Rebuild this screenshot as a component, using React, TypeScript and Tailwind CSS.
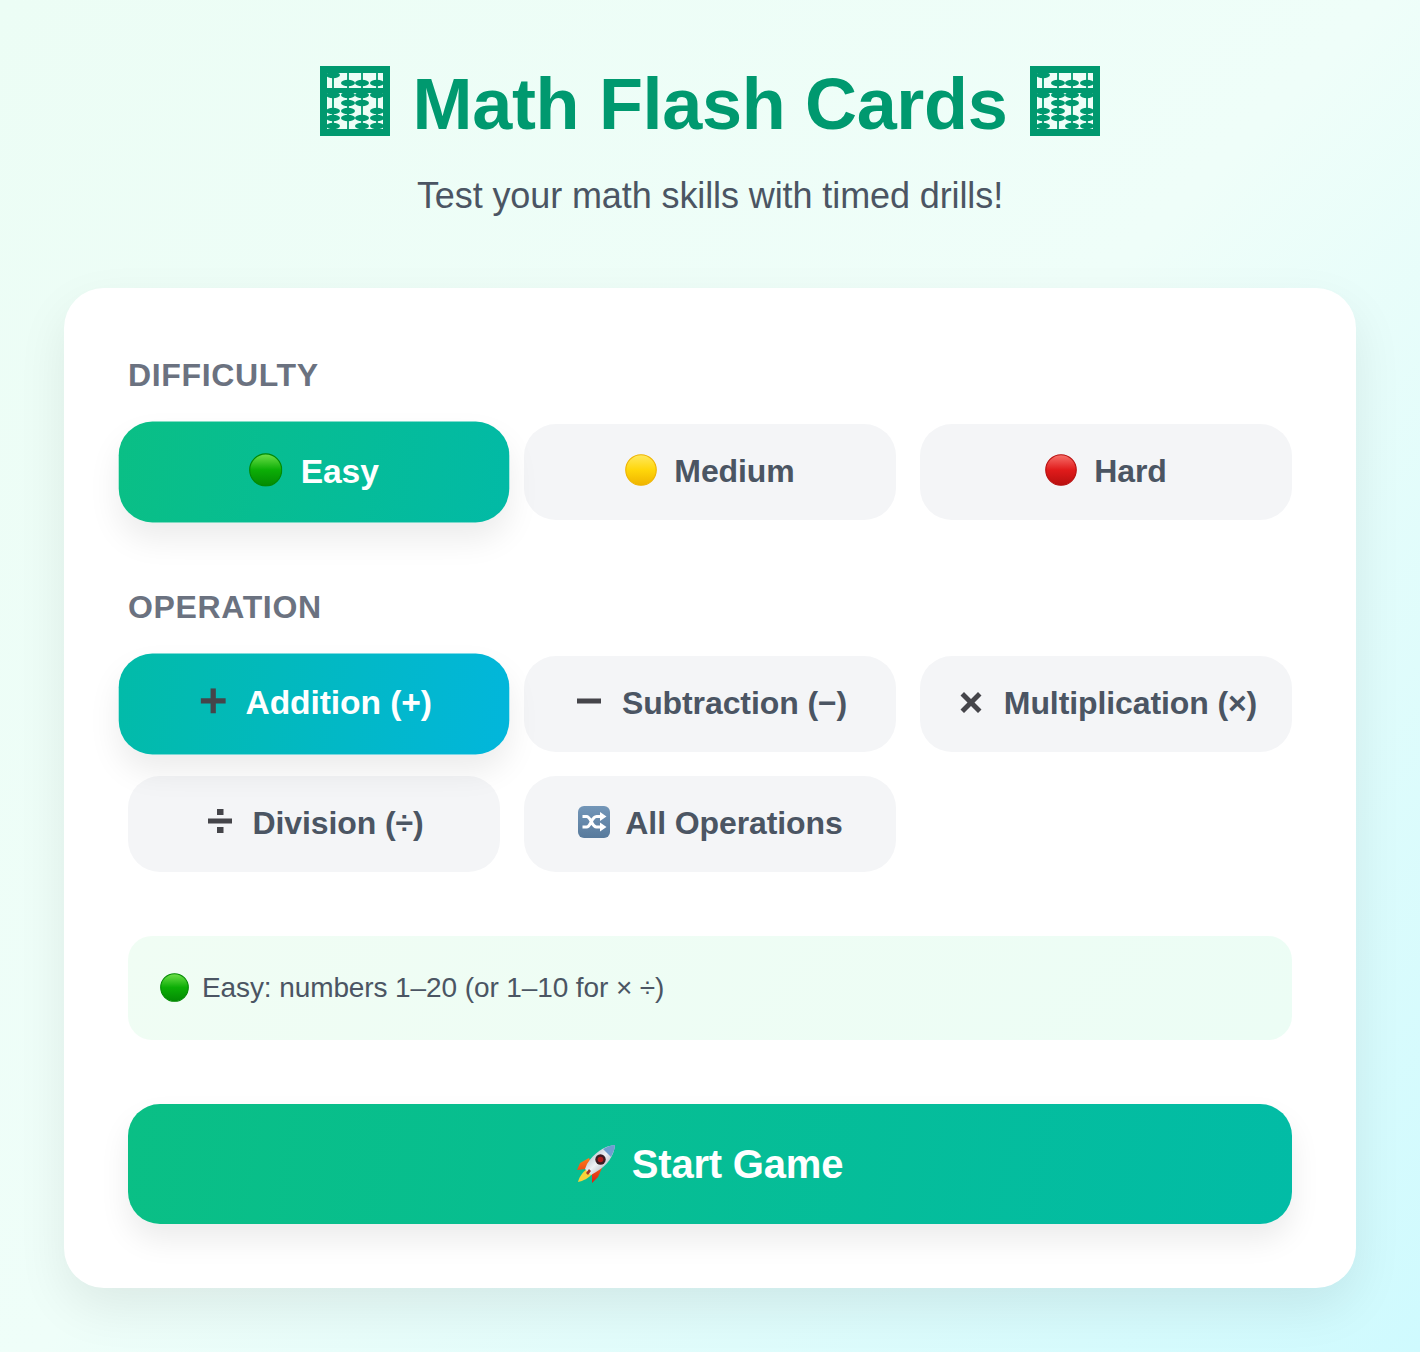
import type { ReactNode } from "react";

const sans = "font-['Liberation_Sans',Arial,sans-serif]";

function Abacus() {
  const cols: [number, number[]][] = [
    [13, [9, 29, 45, 52, 60]],
    [28, [17, 29, 37, 45, 52]],
    [42, [17, 29, 37, 52, 60]],
    [57, [17, 29, 45, 52, 60]],
  ];
  return (
    <svg width="70" height="70" viewBox="0 0 70 70" className="shrink-0 -translate-y-[3px]">
      <path fillRule="evenodd" fill="#00996f" d="M0 0h70v70H0zM7 7v15h56V7zM7 27v36h56V27z" />
      {cols.map(([x, beads]) => (
        <g key={x} fill="#00996f">
          <rect x={x - 0.9} y="7" width="1.8" height="56" />
          {beads.map((y) => (
            <ellipse key={y} cx={x} cy={y} rx="7" ry="3.3" />
          ))}
        </g>
      ))}
    </svg>
  );
}

function Ball({ id, size = 32, light, mid, dark, lift = true }: { id: string; size?: number; light: string; mid: string; dark: string; lift?: boolean }) {
  return (
    <svg width={size} height={size} viewBox="0 0 34 34" className={lift ? "shrink-0 -translate-y-[2px]" : "shrink-0 -translate-y-px"}>
      <defs>
        <linearGradient id={id} x1="0" y1="0" x2="0" y2="1">
          <stop offset="0" stopColor={light} />
          <stop offset="0.5" stopColor={mid} />
          <stop offset="1" stopColor={dark} />
        </linearGradient>
      </defs>
      <circle cx="17" cy="17" r="16.200" fill={`url(#${id})`} stroke={dark} strokeWidth="1.200" />
    </svg>
  );
}

const Green = ({ size, id = "green", lift }: { size?: number; id?: string; lift?: boolean }) => (
  <Ball id={id} size={size} lift={lift} light="#6fe04a" mid="#0cae06" dark="#038a03" />
);
const Yellow = () => <Ball id="yellow" light="#ffe95e" mid="#ffd60a" dark="#efb400" />;
const Red = () => <Ball id="red" light="#f7706a" mid="#e01b1b" dark="#b80f0f" />;

function Plus() {
  return (
    <svg width="24" height="24" viewBox="0 0 24 24" className="shrink-0 -translate-y-[3px]">
      <path fill="#45454a" d="M9.500 0h5v9.500H24v5h-9.500V24h-5v-9.500H0v-5h9.500z" />
    </svg>
  );
}

function Minus() {
  return (
    <svg width="24" height="24" viewBox="0 0 24 24" className="shrink-0 -translate-y-[3px]">
      <rect y="9.500" width="24" height="5" fill="#45454a" />
    </svg>
  );
}

function Times() {
  return (
    <svg width="24" height="24" viewBox="0 0 24 24" className="shrink-0 -translate-y-[2px]">
      <path fill="#45454a" d="M5 2l7 7 7-7 3.500 3.500-7 7 7 7-3.500 3.500-7-7-7 7L1.500 19.500l7-7-7-7z" />
    </svg>
  );
}

function Divide() {
  return (
    <svg width="24" height="24" viewBox="0 0 24 24" className="shrink-0 -translate-y-[3px]">
      <path fill="#45454a" d="M0 9.500h24v5H0zM9 -0.500h6.500V6H9zM9 18h6.500v6.500H9z" />
    </svg>
  );
}

function Shuffle() {
  return (
    <svg width="32" height="32" viewBox="0 0 32 32" className="shrink-0 translate-x-px -translate-y-[2px]">
      <defs>
        <linearGradient id="tile" x1="0" y1="0" x2="0" y2="1">
          <stop offset="0" stopColor="#7396b8" />
          <stop offset="1" stopColor="#587a9c" />
        </linearGradient>
      </defs>
      <rect width="32" height="32" rx="6" fill="url(#tile)" />
      <path
        fill="none"
        stroke="#fff"
        strokeWidth="3"
        d="M4.500 10.500h4c4.500 0 5 10.500 10 10.500H23M4.500 21h4c4.500 0 5-10.500 10-10.500H23"
      />
      <path fill="#fff" d="M22 6l6.500 4.500L22 15zM22 16.500l6.500 4.500-6.500 4.500z" />
    </svg>
  );
}

function Rocket() {
  return (
    <svg width="42" height="42" viewBox="0 0 42 42" className="shrink-0 -translate-x-px">
      <defs>
        <linearGradient id="hull" x1="0" y1="0" x2="1" y2="1">
          <stop offset="0" stopColor="#8b9cad" />
          <stop offset="0.5" stopColor="#eef2f5" />
          <stop offset="1" stopColor="#7d8a96" />
        </linearGradient>
        <linearGradient id="fin" x1="0" y1="0" x2="0" y2="1">
          <stop offset="0" stopColor="#ff7a1a" />
          <stop offset="1" stopColor="#d91f17" />
        </linearGradient>
      </defs>
      <path fill="url(#fin)" d="M14 15L5 20l-3 7 9-1 6-4zM27 25l-4 9-6 6 0-9 4-7z" />
      <path fill="#f8d23a" d="M12 26c-4 3-8 8-9 13 5-1 11-4 14-8z" />
      <path fill="url(#hull)" d="M40 2C29 3 19 10 12 21l-2 5 6 6 5-3c11-6 18-16 19-27z" />
      <path fill="#6f9ed0" d="M40 2c-4 0-8 2-12 4l8 8c2-4 4-8 4-12z" />
      <circle cx="25.500" cy="16.500" r="5.200" fill="#3a1c22" />
      <circle cx="25.500" cy="16.500" r="2.800" fill="#b01c1c" />
      <path fill="#a8342a" d="M14 26l2 2-3 4-2-2z" />
    </svg>
  );
}

function Option({
  icon,
  label,
  gap,
  active,
  activeClass,
}: {
  icon: ReactNode;
  label: string;
  gap: string;
  active?: boolean;
  activeClass?: string;
}) {
  return (
    <button
      className={
        active
          ? `flex h-24 items-center justify-center rounded-[32px] scale-105 text-white text-[32px] font-bold tracking-[-0.1px] shadow-[0_16px_30px_rgba(0,0,0,0.08)] ${gap} ${activeClass}`
          : `flex h-24 items-center justify-center rounded-[32px] bg-[#f4f5f7] text-[#4b5563] text-[32px] font-bold tracking-[-0.1px] ${gap}`
      }
    >
      {icon}
      <span className="-translate-y-px">{label}</span>
    </button>
  );
}

export default function App() {
  return (
    <div className={`${sans} min-h-screen bg-[linear-gradient(135deg,#ecfdf5_0%,#effef9_50%,#cffafe_100%)] p-16`}>
      <header className="mb-[72px] flex flex-col items-center">
        <h1 className="flex h-20 items-center gap-[23px] text-[72px] font-bold tracking-[-0.33px] text-[#00996f]">
          <Abacus />
          Math Flash Cards
          <Abacus />
        </h1>
        <p className="mt-8 text-[36px] leading-10 tracking-[-0.1px] text-[#4b5563]">Test your math skills with timed drills!</p>
      </header>

      <main className="rounded-[40px] bg-white p-16 shadow-[0_20px_50px_rgba(0,0,0,0.08)]">
        <h2 className="mb-[26px] text-[32px] leading-[46px] font-bold tracking-[0.65px] text-[#6b7280]">DIFFICULTY</h2>
        <div className="mb-16 grid grid-cols-3 gap-6">
          <Option icon={<Green />} label="Easy" gap="gap-[17px]" active activeClass="bg-[linear-gradient(100deg,#0abf85,#02baa6)]" />
          <Option icon={<Yellow />} label="Medium" gap="gap-[17px]" />
          <Option icon={<Red />} label="Hard" gap="gap-[17px]" />
        </div>

        <h2 className="mb-[26px] text-[32px] leading-[46px] font-bold tracking-[0.65px] text-[#6b7280]">OPERATION</h2>
        <div className="mb-16 grid grid-cols-3 gap-6">
          <Option icon={<Plus />} label="Addition (+)" gap="gap-[19px] pl-1" active activeClass="bg-[linear-gradient(100deg,#02bba8,#02b6dc)]" />
          <Option icon={<Minus />} label="Subtraction (−)" gap="gap-[21px] pl-1" />
          <Option icon={<Times />} label="Multiplication (×)" gap="gap-[21px] pl-1" />
          <Option icon={<Divide />} label="Division (÷)" gap="gap-[20px] pl-1" />
          <Option icon={<Shuffle />} label="All Operations" gap="gap-[16px]" />
        </div>

        <div className="mb-16 flex h-[104px] items-center gap-[13px] rounded-[24px] bg-[linear-gradient(135deg,#f0fdf4,#ecfdf5)] px-8 text-[28px] tracking-[-0.1px] text-[#4b5563]">
          <Green size={29} id="green-info" lift={false} />
          <span>Easy: numbers 1–20 (or 1–10 for × ÷)</span>
        </div>

        <button className="flex h-[120px] w-full items-center justify-center gap-[15px] rounded-[32px] bg-[linear-gradient(100deg,#0abf85,#02bca6)] text-[40px] font-bold tracking-[-0.2px] text-white shadow-[0_16px_30px_rgba(0,0,0,0.08)]">
          <Rocket />
          <span className="-translate-x-px">Start Game</span>
        </button>
      </main>
    </div>
  );
}
